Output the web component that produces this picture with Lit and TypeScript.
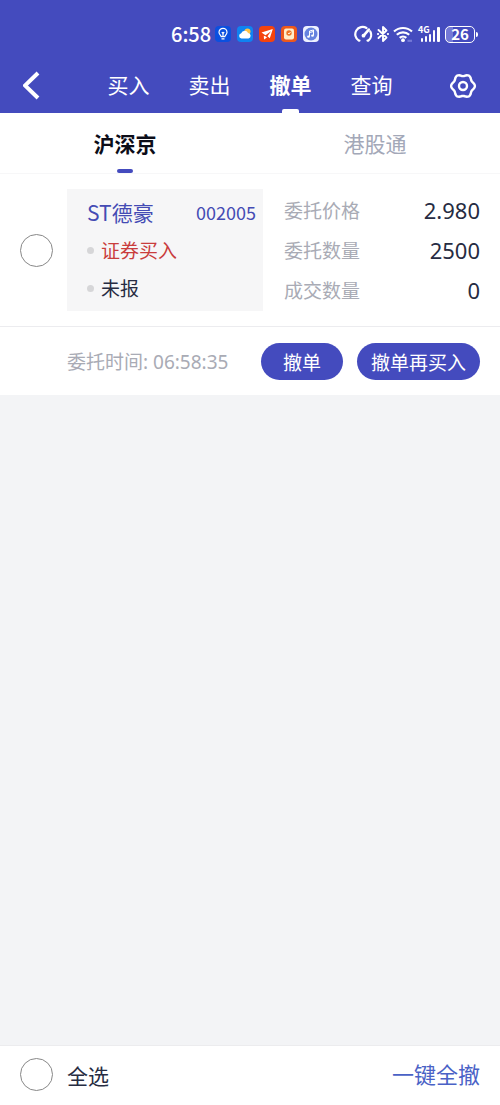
import { LitElement, html, css, svg } from "lit";
import { customElement, property, state } from "lit/decorators.js";
import { classMap } from "lit/directives/class-map.js";

interface Order {
  name: string;
  code: string;
  side: string;
  status: string;
  price: string;
  quantity: string;
  filled: string;
  time: string;
}

const FONT = css`"Noto Sans CJK SC", sans-serif`;
const DIGITS = css`"Noto Sans", "Noto Sans CJK SC", sans-serif`;

@customElement("status-bar")
class StatusBar extends LitElement {
  static styles = css`
    :host {
      display: flex;
      align-items: center;
      justify-content: space-between;
      height: 58px;
      box-sizing: border-box;
      padding: 10px 22px 0 171px;
      color: #fff;
      font-family: ${FONT};
    }
    .group {
      display: flex;
      align-items: center;
      gap: 6px;
    }
    .status {
      gap: 4px;
    }
    .system {
      gap: 4px;
    }
    .clock {
      font-size: 20px;
      line-height: 24px;
      font-weight: 500;
    }
    svg {
      display: block;
      flex: none;
    }
    .battery {
      font: 700 15px/16px ${FONT};
      display: flex;
      align-items: center;
      justify-content: center;
      box-sizing: border-box;
      width: 30px;
      height: 17px;
      border: 1px solid #fff;
      border-radius: 5px;
      background: linear-gradient(90deg, #7479d6 26%, transparent 26%);
    }
    .cell {
      display: flex;
      align-items: center;
      gap: 1px;
    }
    .nub {
      width: 2px;
      height: 5px;
      border-radius: 0 2px 2px 0;
      background: #fff;
    }
  `;

  render() {
    return html`
      <div class="group status">
        <span class="clock">6:58</span>
        <div class="group">
          <svg width="16" height="16" viewBox="0 0 16 16" fill="none" stroke="#fff" stroke-width="1.200">
            <rect width="16" height="16" rx="4" fill="#0b50df" stroke="none" />
            <path d="M6.200 10.600C6 9.300 4 8.600 4 6.300a4 4 0 0 1 8 0c0 2.300-2 3-2.200 4.300zM6.500 12.900h3M8 10V7.500M6.800 6.200l1.200 1.300 1.200-1.300" />
          </svg>
          <svg width="16" height="16" viewBox="0 0 16 16">
            <rect width="16" height="16" rx="4" fill="#0f83f1" />
            <circle cx="10.500" cy="5.500" r="3" fill="#ffc247" />
            <path d="M4.500 12.500a2.700 2.700 0 0 1-.3-5.300 3.700 3.700 0 0 1 6.900-.2 2.800 2.800 0 0 1 .4 5.500z" fill="#fff" />
          </svg>
          <svg width="16" height="16" viewBox="0 0 16 16">
            <rect width="16" height="16" rx="4" fill="#f5430d" />
            <path d="M2.500 6.500 13.800 3l-3 9.300-2.300-2L12 5.300 6.500 9.300z" fill="#fff" />
            <path d="m4.800 9.800 1.500.5 1.700 1.200-3 2z" fill="#fff" />
          </svg>
          <svg width="16" height="16" viewBox="0 0 16 16">
            <rect width="16" height="16" rx="4" fill="#ed591c" />
            <rect x="3" y="2.500" width="10" height="11" rx="2" fill="#ffeecb" />
            <circle cx="8" cy="7" r="2.700" fill="#ed7626" />
            <path d="m7 7 1 1 1.500-2" stroke="#fff3d7" fill="none" />
          </svg>
          <svg width="16" height="16" viewBox="0 0 16 16">
            <rect width="16" height="16" rx="4" fill="#eef1ff" />
            <circle cx="8" cy="8" r="6.500" fill="#6683df" />
            <path d="M6.500 10.500V5l4-1v5.500M6.500 6.500l4-1" stroke="#fff" fill="none" />
            <ellipse cx="5.500" cy="10.700" rx="1.400" ry="1.100" fill="#fff" />
            <ellipse cx="9.500" cy="9.700" rx="1.400" ry="1.100" fill="#fff" />
          </svg>
        </div>
      </div>
      <div class="group system">
        <svg width="19" height="18" viewBox="0 0 19 18" fill="none" stroke="#fff" stroke-width="2.200">
          <path d="M5.500 15.600H4.800A7.300 7.300 0 0 1 12.500 3M16.300 6.500a7.300 7.300 0 0 1-2 9.100h-.8" stroke-linecap="round" stroke-linejoin="round" />
          <path d="M14.800 4.600 9.800 10.300" stroke-width="2.600" stroke-linecap="round" />
          <circle cx="9.500" cy="10.700" r="1.900" fill="#fff" stroke="none" />
        </svg>
        <svg width="12" height="18" viewBox="0 0 12 18" fill="none" stroke="#fff" stroke-width="1.900">
          <path d="m1.500 5 8 7.500L6 16V2l3.500 3.500-8 7.500" stroke-linejoin="round" stroke-linecap="round" />
          <path d="M.8 9h.4M10.800 9h.4" stroke-linecap="round" />
        </svg>
        <svg width="20" height="18" viewBox="0 0 20 18" fill="none" stroke="#fff" stroke-width="2.200">
          <path d="M1 6.500a13.300 13.300 0 0 1 18 0M3.800 9.800a9.200 9.200 0 0 1 12.400 0M6.700 12.900a5 5 0 0 1 6.600 0" />
          <circle cx="10" cy="15.200" r="1.900" fill="#fff" stroke="none" />
          <path d="M14.500 15.800h4.500" stroke="#7479d6" />
        </svg>
        <svg width="24" height="28" viewBox="0 -3 24 28" fill="#fff">
          <text x="1" y="10" font-family="Noto Sans CJK SC, sans-serif" font-size="9" font-weight="700">4G</text>
          <rect x="4" y="15" width="2" height="4" rx="1" />
          <rect x="8" y="13" width="2" height="6" rx="1" />
          <rect x="12" y="11" width="2" height="8" rx="1" />
          <rect x="16" y="7" width="2" height="12" rx="1" />
          <rect x="20" y="4" width="3" height="15" rx="1" />
        </svg>
        <div class="cell"><span class="battery">26</span><span class="nub"></span></div>
      </div>
    `;
  }
}

@customElement("order-card")
class OrderCard extends LitElement {
  @property({ attribute: false }) order!: Order;
  @property({ type: Boolean }) selected = false;

  static styles = css`
    :host {
      display: block;
      background: #fff;
      font-family: ${FONT};
      font-size: 19px;
      line-height: 28px;
      color: #272c42;
    }
    .row {
      display: grid;
      grid-template-columns: 33px 1fr;
      column-gap: 14px;
      align-items: center;
      padding: 15px 20px;
      border-bottom: 1px solid #ececef;
    }
    .check {
      appearance: none;
      box-sizing: border-box;
      width: 33px;
      height: 33px;
      margin: 0;
      border: 1px solid #888;
      border-radius: 50%;
    }
    .check:checked {
      background: #444bbe;
    }
    .detail {
      display: grid;
      grid-template-columns: 1fr 1fr;
      column-gap: 21px;
    }
    .stock {
      display: flex;
      flex-direction: column;
      gap: 10px;
      padding: 9px 7px 9px 20px;
      background: #f6f6f7;
    }
    .title {
      display: flex;
      justify-content: space-between;
      align-items: center;
      color: #444bb4;
    }
    .name {
      font-size: 21px;
    }
    .code {
      font-size: 18px;
    }
    .tag {
      display: flex;
      align-items: center;
      gap: 7px;
    }
    .tag::before {
      content: "";
      width: 7px;
      height: 7px;
      border-radius: 50%;
      background: #d6d6d8;
    }
    .buy {
      color: #c93d3d;
    }
    .figures {
      display: flex;
      flex-direction: column;
      gap: 12px;
      margin: 0;
      padding-top: 7px;
    }
    .figure {
      display: flex;
      justify-content: space-between;
      align-items: center;
    }
    dt {
      color: #a9abb5;
    }
    dd {
      margin: 0;
      font-family: ${DIGITS};
      font-size: 22px;
    }
    .actions {
      display: flex;
      align-items: center;
      gap: 14px;
      padding: 16px 20px 15px 67px;
    }
    .time {
      flex: 1;
      font-family: ${DIGITS};
      color: #a9abb5;
    }
    .pill {
      box-sizing: border-box;
      min-width: 82px;
      height: 37px;
      padding: 0 14px;
      border: 0;
      border-radius: 19px;
      background: #444bbe;
      color: #fff;
      font: inherit;
      white-space: nowrap;
    }
  `;

  private toggle(e: Event) {
    this.selected = (e.target as HTMLInputElement).checked;
    this.dispatchEvent(new CustomEvent("select-change", { detail: this.selected }));
  }

  render() {
    const o = this.order;
    const figures = [
      ["委托价格", o.price],
      ["委托数量", o.quantity],
      ["成交数量", o.filled],
    ];
    return html`
      <div class="row">
        <input class="check" type="checkbox" aria-labelledby="name" .checked=${this.selected} @change=${this.toggle} />
        <div class="detail">
          <div class="stock">
            <div class="title"><span class="name" id="name">${o.name}</span><span class="code">${o.code}</span></div>
            <div class="tag buy">${o.side}</div>
            <div class="tag">${o.status}</div>
          </div>
          <dl class="figures">
            ${figures.map(([k, v]) => html`<div class="figure"><dt>${k}</dt><dd>${v}</dd></div>`)}
          </dl>
        </div>
      </div>
      <div class="actions">
        <span class="time">委托时间: ${o.time}</span>
        <button class="pill">撤单</button>
        <button class="pill">撤单再买入</button>
      </div>
    `;
  }
}

// Six rounded lobes, one pointing to each side, with a dip at the top and bottom.
const gearOutline = Array.from({ length: 72 }, (_, i) => {
  const a = (i * Math.PI) / 36;
  const r = 10.9 + Math.cos(6 * a) * 1;
  return `${(13 + r * Math.cos(a)).toFixed(2)} ${(15 + r * Math.sin(a)).toFixed(2)}`;
}).join("L");

const gear = svg`
  <path d=${`M${gearOutline}Z`} />
  <circle cx="13" cy="15" r="4" />
`;

@customElement("app-root")
class AppRoot extends LitElement {
  @state() private page = "撤单";
  @state() private market = "沪深京";
  @state() private all = false;

  private pages = ["买入", "卖出", "撤单", "查询"];
  private markets = ["沪深京", "港股通"];
  private orders: Order[] = [
    {
      name: "ST德豪",
      code: "002005",
      side: "证券买入",
      status: "未报",
      price: "2.980",
      quantity: "2500",
      filled: "0",
      time: "06:58:35",
    },
  ];

  static styles = css`
    :host {
      display: flex;
      flex-direction: column;
      min-height: 100vh;
      background: #f3f4f6;
      font-family: ${FONT};
      color: #272c42;
    }
    button {
      border: 0;
      padding: 0;
      background: none;
      font: inherit;
      color: inherit;
    }
    svg {
      display: block;
    }
    header {
      background: #444bbe;
      color: #fff;
    }
    .bar {
      display: grid;
      grid-template-columns: 1fr auto 1fr;
      align-items: center;
      height: 55px;
      padding: 0 23px;
    }
    .back {
      justify-self: start;
    }
    .settings {
      justify-self: end;
    }
    .pages {
      display: flex;
      gap: 39px;
      height: 100%;
      font-size: 21px;
      line-height: 52px;
    }
    .page,
    .market {
      display: flex;
      flex-direction: column;
      align-items: center;
      justify-content: space-between;
    }
    .page.on {
      font-weight: 700;
    }
    .page.on::after {
      content: "";
      width: 17px;
      height: 4px;
      margin-top: -1px;
      border-radius: 2px 2px 0 0;
      background: #fff;
    }
    .markets {
      display: grid;
      grid-template-columns: 1fr 1fr;
      height: 61px;
      box-sizing: border-box;
      border-bottom: 1px solid #f7f7f8;
      background: #fff;
      font-size: 21px;
      line-height: 60px;
      color: #a3a8b8;
    }
    .market.on {
      font-weight: 700;
      color: #0c0d18;
    }
    .market.on::after {
      content: "";
      width: 16px;
      height: 4px;
      margin-top: -4px;
      border-radius: 2px;
      background: #444bbe;
    }
    main {
      flex: 1;
    }
    footer {
      display: flex;
      align-items: center;
      justify-content: space-between;
      height: 60px;
      box-sizing: border-box;
      border-top: 1px solid #ececee;
      padding: 0 20px 2px;
      background: #fff;
      font-size: 21px;
      line-height: 30px;
    }
    .all {
      display: flex;
      align-items: center;
      gap: 14px;
    }
    .check {
      appearance: none;
      box-sizing: border-box;
      width: 33px;
      height: 33px;
      margin: 0;
      border: 1px solid #888;
      border-radius: 50%;
    }
    .check:checked {
      background: #444bbe;
    }
    .cancel-all {
      padding-bottom: 3px;
      font-size: 22px;
      color: #4a62c6;
    }
  `;

  render() {
    return html`
      <header>
        <status-bar></status-bar>
        <div class="bar">
          <button class="back" aria-label="返回">
            <svg width="18" height="30" viewBox="0 0 18 30" fill="none" stroke="#fff" stroke-width="4">
              <path d="M15 2 2 14.500 15 27" />
            </svg>
          </button>
          <nav class="pages">
            ${this.pages.map(
              (p) => html`<button class=${classMap({ page: true, on: p === this.page })} @click=${() => (this.page = p)}>${p}</button>`
            )}
          </nav>
          <button class="settings" aria-label="设置">
            <svg width="27" height="30" viewBox="0 0 27 30" fill="none" stroke="#fff" stroke-width="2.400" stroke-linejoin="round">
              ${gear}
            </svg>
          </button>
        </div>
      </header>
      <nav class="markets">
        ${this.markets.map(
          (m) => html`<button class=${classMap({ market: true, on: m === this.market })} @click=${() => (this.market = m)}>${m}</button>`
        )}
      </nav>
      <main>
        ${this.orders.map((o) => html`<order-card .order=${o} .selected=${this.all}></order-card>`)}
      </main>
      <footer>
        <label class="all">
          <input
            class="check"
            type="checkbox"
            .checked=${this.all}
            @change=${(e: Event) => (this.all = (e.target as HTMLInputElement).checked)}
          />
          全选
        </label>
        <button class="cancel-all">一键全撤</button>
      </footer>
    `;
  }
}
